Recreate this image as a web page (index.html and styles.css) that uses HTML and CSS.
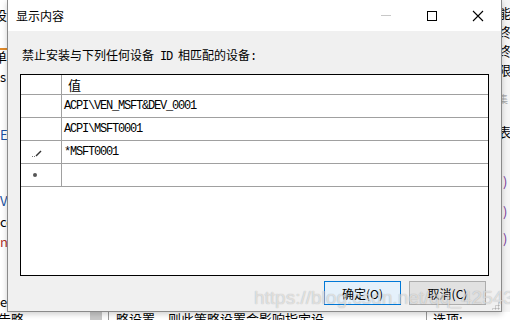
FILE: index.html
```html
<!DOCTYPE html>
<html lang="zh-CN">
<head>
    <meta charset="UTF-8">
    <title>显示内容</title>
    <link rel="stylesheet" href="styles.css">
</head>
<body>
    <div class="desk">
        <div class="desk-top">
            <div class="side-left">
                <span class="frag f-l1">设置</span>
                <span class="frag f-l2">单位</span>
                <span class="frag f-l3">s</span>
                <span class="frag f-l4 blue">E</span>
                <span class="frag f-l5 blue">V</span>
                <span class="frag f-l6">ce</span>
                <span class="frag f-l7 red">n</span>
                <span class="frag f-l8">e</span>
            </div>
            <div class="desk-middle"></div>
            <div class="side-right">
                <span class="frag f-r1">能</span>
                <span class="frag f-r2">终</span>
                <span class="frag f-r3">终</span>
                <span class="frag f-r4">限</span>
                <span class="frag f-r5 gray">集</span>
                <span class="frag f-r6">表</span>
                <span class="frag f-r7 purple">)</span>
                <span class="frag f-r8 purple">)</span>
                <span class="frag f-r9 purple">)</span>
            </div>
        </div>
        <div class="desk-bottom">
            <span class="b-left">告略</span>
            <span class="b-scroll"></span>
            <span class="b-text">略设置，则此策略设置会影响指定设</span>
            <span class="b-text2">选项:</span>
        </div>
    </div>

    <div class="dialog">
        <div class="titlebar">
            <span class="title">显示内容</span>
            <div class="controls">
                <span class="ctl ctl-min"><i></i></span>
                <span class="ctl ctl-max"><i></i></span>
                <span class="ctl ctl-close">
                    <svg width="12" height="12" viewBox="0 0 12 12"><path d="M1 1L11 11M11 1L1 11" stroke="#000" stroke-width="1.1" fill="none"/></svg>
                </span>
            </div>
        </div>
        <div class="content">
            <p class="label">禁止安装与下列任何设备<span class="half"> ID </span>相匹配的设备<span class="half">:</span></p>
            <div class="grid">
                <div class="row head">
                    <div class="rh"></div>
                    <div class="cell">值</div>
                </div>
                <div class="row">
                    <div class="rh"></div>
                    <div class="cell mono">ACPI\VEN_MSFT&amp;DEV_0001</div>
                </div>
                <div class="row">
                    <div class="rh"></div>
                    <div class="cell mono">ACPI\MSFT0001</div>
                </div>
                <div class="row">
                    <div class="rh">
                        <svg class="pencil" width="10" height="8" viewBox="0 0 10 8"><path d="M4 7L9 2" stroke="#333" stroke-width="1.4" fill="none"/><rect x="0" y="7" width="1" height="1" fill="#777"/><rect x="2" y="7" width="1" height="1" fill="#777"/></svg>
                    </div>
                    <div class="cell mono">*MSFT0001</div>
                </div>
                <div class="row">
                    <div class="rh"><span class="newdot"></span></div>
                    <div class="cell"></div>
                </div>
            </div>
            <div class="buttons">
                <button class="btn btn-ok">确定(O)</button>
                <button class="btn">取消(C)</button>
            </div>
        </div>
        <span class="grip"></span>
        <span class="watermark">https://blog.csdn.net/qq_42543478</span>
    </div>
</body>
</html>
```

FILE: styles.css
```css
* {
    box-sizing: border-box;
    margin: 0;
    padding: 0;
}

body {
    width: 510px;
    height: 320px;
    overflow: hidden;
    background-color: #fff;
    font-family: "Noto Sans CJK SC", "DejaVu Sans", sans-serif;
    font-size: 12px;
    color: #000;
}

/* window behind the dialog */
.desk {
    width: 510px;
    height: 320px;
    display: flex;
    flex-direction: column;
}

.desk-top {
    flex: 1;
    display: flex;
}

.side-left {
    width: 7px;
    overflow: hidden;
    display: flex;
    flex-direction: column;
    white-space: nowrap;
}

.desk-middle { flex: 1; }

.side-right {
    width: 9px;
    overflow: hidden;
    display: flex;
    flex-direction: column;
    white-space: nowrap;
    background-color: #f5f5f5;
    border-left: 1px solid #d8d8d8;
    padding-left: 1px;
}

.frag {
    display: block;
    line-height: 14px;
    height: 14px;
    font-size: 13px;
}

.blue { color: #1a4fa0; }
.red { color: #b0302a; }
.gray { color: #aaa; font-size: 10px; }
.purple { color: #7a3a9a; }

.f-l1 { margin-top: 8px; margin-left: -6px; }
.f-l2 { margin-top: 26px; margin-left: -6px; border-top: 2px solid #e08a2a; }
.f-l3 { margin-top: 8px; }
.f-l4 { margin-top: 44px; }
.f-l5 { margin-top: 52px; }
.f-l6 { margin-top: 7px; }
.f-l7 { margin-top: 6px; }
.f-l8 { margin-top: 46px; }

.f-r1 { margin-top: 6px; margin-left: -5px; }
.f-r2 { margin-top: 5px; margin-left: -5px; }
.f-r3 { margin-top: 5px; margin-left: -5px; }
.f-r4 { margin-top: 5px; margin-left: -5px; }
.f-r5 { margin-top: 15px; margin-left: -5px; }
.f-r6 { margin-top: 19px; margin-left: -5px; }
.f-r7 { margin-top: 36px; }
.f-r8 { margin-top: 16px; }
.f-r9 { margin-top: 13px; }

.desk-bottom {
    height: 8px;
    display: flex;
    overflow: hidden;
    white-space: nowrap;
    font-size: 13px;
    line-height: 14px;
}

.b-left { width: 92px; margin-left: -2px; }
.b-scroll {
    width: 18px;
    background-color: #c8c8c8;
    border-right: 6px solid #fff;
    box-shadow: 1px 0 0 #999;
}
.b-text { width: 318px; padding-left: 8px; }
.b-text2 { border-left: 1px solid #999; padding-left: 6px; }

/* dialog */
.dialog {
    position: absolute;
    left: 7px;
    top: 0;
    width: 495px;
    height: 312px;
    background-color: #f0f0f0;
    border: 1px solid #8a8a8a;
    border-top: none;
    box-shadow: 0 2px 6px #00000033;
    display: flex;
    flex-direction: column;
}

.titlebar {
    height: 31px;
    background-color: #fff;
    display: flex;
    align-items: center;
    justify-content: space-between;
}

.title {
    padding-left: 8px;
    font-size: 12px;
}

.controls {
    display: flex;
    height: 31px;
}

.ctl {
    width: 46px;
    display: flex;
    align-items: center;
    justify-content: center;
}

.ctl-min i {
    width: 10px;
    height: 1px;
    background-color: #c8c8c8;
}

.ctl-max i {
    width: 10px;
    height: 10px;
    border: 1px solid #000;
}

.content {
    flex: 1;
    padding: 16px 12px 0 12px;
    display: flex;
    flex-direction: column;
}

.label {
    margin-left: 2px;
    line-height: 16px;
    height: 16px;
    white-space: pre;
}

.half {
    font-family: "Liberation Mono", monospace;
    font-size: 12px;
    letter-spacing: -1.2px;
}

.grid {
    margin-top: 11px;
    height: 202px;
    background-color: #fff;
    border: 1px solid #000;
}

.row {
    display: flex;
    height: 23px;
    border-bottom: 1px solid #a0a0a0;
}

.row.head { height: 20px; }

.rh {
    width: 41px;
    border-right: 1px solid #a0a0a0;
    display: flex;
    align-items: center;
    padding-left: 9px;
}

.cell {
    flex: 1;
    display: flex;
    align-items: center;
    padding-left: 2px;
}

.head .cell {
    padding-left: 6px;
    font-size: 13px;
}

.mono {
    font-family: "Liberation Mono", monospace;
    font-size: 12px;
    letter-spacing: -1.2px;
}

.pencil { margin-left: 2px; margin-top: 2px; }

.newdot {
    width: 4px;
    height: 4px;
    margin-left: 3px;
    border-radius: 50%;
    background-color: #555;
}

.buttons {
    margin-top: 5px;
    padding-right: 3px;
    display: flex;
    justify-content: flex-end;
    gap: 8px;
}

.btn {
    width: 77px;
    height: 24px;
    font-family: "Noto Sans CJK SC", "DejaVu Sans", sans-serif;
    font-size: 12px;
    color: #000;
    background-color: #e1e1e1;
    border: 1px solid #adadad;
}

.btn-ok {
    background-color: #e5f1fb;
    border-color: #0078d7;
}

.grip {
    position: absolute;
    right: 1px;
    bottom: 1px;
    width: 9px;
    height: 9px;
    background-image: radial-gradient(#b0b0b0 45%, transparent 50%);
    background-size: 3px 3px;
    clip-path: polygon(100% 0, 100% 100%, 0 100%);
}

.watermark {
    position: absolute;
    left: 246px;
    top: 287px;
    font-family: "Liberation Sans", sans-serif;
    font-size: 19px;
    color: #ffffff99;
    text-shadow: 0 0 1px #00000050;
    white-space: nowrap;
    pointer-events: none;
}
```
